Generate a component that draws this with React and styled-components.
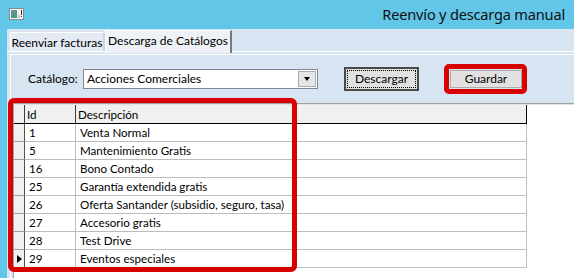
import styled, { createGlobalStyle } from 'styled-components'

const GlobalStyle = createGlobalStyle`
  html, body { margin: 0; padding: 0; }
  body {
    width: 574px;
    height: 278px;
    overflow: hidden;
    font-family: Lato, "Noto Sans", sans-serif;
    font-size: 11.6px;
    color: #000;
  }
`

const rows = [
  { id: 1, desc: 'Venta Normal' },
  { id: 5, desc: 'Mantenimiento Gratis' },
  { id: 16, desc: 'Bono Contado' },
  { id: 25, desc: 'Garantía extendida gratis' },
  { id: 26, desc: 'Oferta Santander (subsidio, seguro, tasa)' },
  { id: 27, desc: 'Accesorio gratis' },
  { id: 28, desc: 'Test Drive' },
  { id: 29, desc: 'Eventos especiales' },
]

function WindowIcon() {
  return (
    <svg width="15" height="12" viewBox="0 0 15 12">
      <defs>
        <linearGradient id="ico" x1="0" y1="0" x2="1" y2="1">
          <stop offset="0" stopColor="#6f8fa0" />
          <stop offset="1" stopColor="#3f9e6c" />
        </linearGradient>
      </defs>
      <rect x="0.5" y="0.5" width="14" height="11" fill="#f4f4f4" stroke="#8a8a8a" />
      <rect x="2" y="2" width="6" height="8" fill="url(#ico)" />
      <rect x="9" y="7" width="2" height="3" fill="#b9c6cf" />
      <rect x="12" y="2" width="1" height="5" fill="#333" />
      <rect x="12" y="8" width="1" height="1" fill="#333" />
    </svg>
  )
}

function App() {
  return (
    <Window>
      <GlobalStyle />
      <TitleBar>
        <WindowIcon />
        <Title>Reenvío y descarga manual</Title>
      </TitleBar>
      <Client>
        <TabStrip>
          <Tab $w={95}>Reenviar facturas</Tab>
          <Tab $w={127} $active>Descarga de Catálogos</Tab>
        </TabStrip>
        <Panel>
          <Toolbar>
            <Label>Catálogo:</Label>
            <Combo>
              <ComboText>Acciones Comerciales</ComboText>
              <ComboArrow />
            </Combo>
            <Button $focused $w={75} $h={24} $ml={26}>
              <Focus>Descargar</Focus>
            </Button>
            <Highlighted $ml={31}>
              <Button $w={72} $h={18}>Guardar</Button>
              <GuardarMark />
            </Highlighted>
          </Toolbar>
          <GridBox>
            <Row $header>
              <HeadCell $rowHead />
              <HeadCell>Id</HeadCell>
              <HeadCell $last>Descripción</HeadCell>
            </Row>
            {rows.map((r, i) => (
              <Row key={r.id}>
                <RowHead>{i === rows.length - 1 && <Current />}</RowHead>
                <Cell>{r.id}</Cell>
                <Cell>{r.desc}</Cell>
              </Row>
            ))}
            <GridMark />
          </GridBox>
        </Panel>
      </Client>
    </Window>
  )
}

export default App

const Window = styled.div`
  width: 574px;
  height: 278px;
  background: #62c6e8;
  display: flex;
  flex-direction: column;
  overflow: hidden;
`

const TitleBar = styled.div`
  height: 28px;
  flex: none;
  display: flex;
  align-items: center;
  justify-content: space-between;
  padding: 0 9px 1px 9px;
`

const Title = styled.div`
  font-family: "Noto Sans", Lato, sans-serif;
  font-size: 14.6px;
  color: #111;
  letter-spacing: -0.2px;
`

const Client = styled.div`
  flex: 1;
  margin-left: 7px;
  background: #d7e4f2;
  display: flex;
  flex-direction: column;
`

const TabStrip = styled.div`
  height: 22px;
  flex: none;
  display: flex;
  align-items: flex-end;
  padding-left: 3px;
  border-bottom: 1px solid #fff;
`

const Tab = styled.div`
  width: ${({ $w }) => $w}px;
  height: ${({ $active }) => ($active ? 23 : 19)}px;
  margin-bottom: ${({ $active }) => ($active ? -2 : 0)}px;
  position: relative;
  z-index: ${({ $active }) => ($active ? 1 : 0)};
  box-sizing: border-box;
  display: flex;
  align-items: center;
  justify-content: center;
  padding-bottom: ${({ $active }) => ($active ? 3 : 0)}px;
  background: ${({ $active }) => ($active ? '#eef2f7' : '#e3eaf3')};
  border-top: 1px solid #fff;
  border-left: 1px solid #fff;
  border-right: 2px solid ${({ $active }) => ($active ? '#7a7a7a' : '#c9d3de')};
  font-size: 12px;
`

const Panel = styled.div`
  flex: 1;
  margin: 2px 0 0 3px;
  border-top: 1px solid #fff;
  border-left: 1px solid #fff;
  display: flex;
  flex-direction: column;
`

const Toolbar = styled.div`
  height: 48px;
  flex: none;
  display: flex;
  align-items: center;
  padding: 0 0 1px 17px;
  box-sizing: border-box;
`

const Label = styled.span`
  font-size: 12px;
  width: 55px;
`

const Combo = styled.div`
  width: 235px;
  height: 20px;
  box-sizing: border-box;
  background: #fff;
  border: 1px solid #828790;
  display: flex;
  align-items: center;
`

const ComboText = styled.span`
  flex: 1;
  padding-left: 3px;
  font-size: 12px;
`

const ComboArrow = styled.div`
  width: 18px;
  height: 16px;
  margin-right: 1px;
  box-sizing: border-box;
  background: #e6e6e6;
  border: 1px solid #acacac;
  display: flex;
  align-items: center;
  justify-content: center;
  &::after {
    content: '';
    border-top: 4px solid #000;
    border-left: 3.5px solid transparent;
    border-right: 3.5px solid transparent;
  }
`

const Button = styled.div`
  width: ${({ $w }) => $w}px;
  height: ${({ $h }) => $h}px;
  margin-left: ${({ $ml }) => $ml || 0}px;
  box-sizing: border-box;
  background: #e1e1e1;
  border: ${({ $focused }) => ($focused ? '2px solid #4a4a4a' : '1px solid #adadad')};
  display: flex;
  align-items: center;
  justify-content: center;
  padding: ${({ $focused }) => ($focused ? '1px' : '0')};
  font-size: 12px;
`

const Focus = styled.div`
  flex: 1;
  align-self: stretch;
  border: 1px dotted #000;
  display: flex;
  align-items: center;
  justify-content: center;
`

const Highlighted = styled.div`
  position: relative;
  margin-left: ${({ $ml }) => $ml}px;
`

const GuardarMark = styled.div`
  position: absolute;
  left: -6px;
  right: -5px;
  top: -6px;
  bottom: -6px;
  border: 5px solid #d90000;
  border-radius: 5px;
`

const GridBox = styled.div`
  flex: 1;
  margin-left: 2px;
  position: relative;
  background: #fff;
  border-top: 1px solid #a0a0a0;
  border-left: 1px solid #a0a0a0;
  box-shadow: inset 0 1px 0 #e3e3e3;
  padding-top: 1px;
`

const Row = styled.div`
  display: grid;
  grid-template-columns: 11px 51px 451px;
  height: ${({ $header }) => ($header ? 19 : 18)}px;
`

const HeadCell = styled.div`
  box-sizing: border-box;
  background: #f0f0f0;
  border-bottom: 1px solid #000;
  border-right: 1px solid ${({ $last }) => ($last ? '#000' : '#3c3c3c')};
  padding: 1px 0 0 2px;
  display: flex;
  align-items: center;
`

const RowHead = styled.div`
  box-sizing: border-box;
  background: #f0f0f0;
  border-bottom: 1px solid #a0a0a0;
  border-right: 1px solid #505050;
  display: flex;
  align-items: center;
  justify-content: center;
`

const Current = styled.div`
  border-left: 5px solid #000;
  border-top: 4.5px solid transparent;
  border-bottom: 4.5px solid transparent;
`

const Cell = styled.div`
  box-sizing: border-box;
  border-bottom: 1px solid #bdbdbd;
  border-right: 1px solid #bdbdbd;
  padding-left: 4px;
  display: flex;
  align-items: center;
  white-space: nowrap;
`

const GridMark = styled.div`
  position: absolute;
  left: -6px;
  top: -6px;
  width: 289px;
  height: 174px;
  box-sizing: border-box;
  border: 5px solid #d90000;
  border-radius: 6px;
`
